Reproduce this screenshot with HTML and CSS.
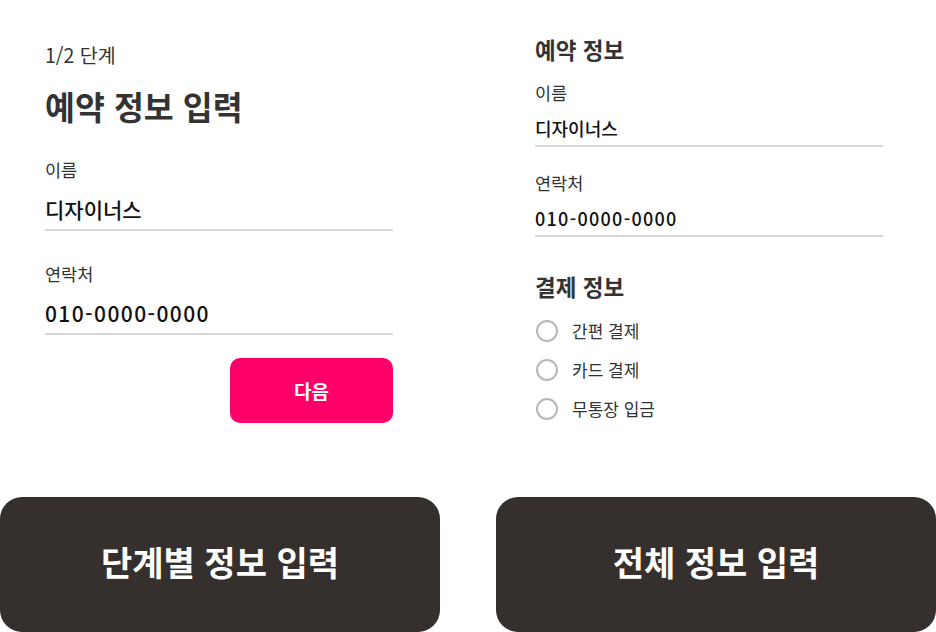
FILE: index.html
```html
<!DOCTYPE html>
<html lang="ko">
<head>
    <meta charset="UTF-8">
    <meta name="viewport" content="width=device-width, initial-scale=1.0">
    <title>예약 정보 입력</title>
    <link rel="stylesheet" href="styles.css">
</head>
<body>
    <div class="layout">
        <!-- 단계별 입력 -->
        <section class="panel panel-step">
            <p class="step">1/2 단계</p>
            <h1 class="step-title">예약 정보 입력</h1>
            <div class="field">
                <label class="field-label">이름</label>
                <div class="field-value">디자이너스</div>
            </div>
            <div class="field">
                <label class="field-label">연락처</label>
                <div class="field-value tel">010-0000-0000</div>
            </div>
            <div class="actions">
                <button type="button" class="next-btn">다음</button>
            </div>
        </section>

        <!-- 전체 입력 -->
        <section class="panel panel-full">
            <h2 class="group-title">예약 정보</h2>
            <div class="field">
                <label class="field-label">이름</label>
                <div class="field-value">디자이너스</div>
            </div>
            <div class="field">
                <label class="field-label">연락처</label>
                <div class="field-value tel">010-0000-0000</div>
            </div>
            <h2 class="group-title pay-title">결제 정보</h2>
            <ul class="radio-list">
                <li class="radio-item"><span class="radio"></span>간편 결제</li>
                <li class="radio-item"><span class="radio"></span>카드 결제</li>
                <li class="radio-item"><span class="radio"></span>무통장 입금</li>
            </ul>
        </section>

        <div class="card">단계별 정보 입력</div>
        <div class="card">전체 정보 입력</div>
    </div>
</body>
</html>
```

FILE: styles.css
```css
* {
    margin: 0;
    padding: 0;
    box-sizing: border-box;
    font-family: 'Noto Sans CJK KR', 'Noto Sans', sans-serif;
}

body {
    background: #fff;
    color: #333;
    width: 936px;
    height: 632px;
    overflow: hidden;
}

.layout {
    display: grid;
    grid-template-columns: 440px 440px;
    grid-template-rows: 497px 135px;
    column-gap: 56px;
}

/* Panels */
.panel-step {
    padding: 41px 47px 0 45px;
}

.panel-full {
    padding: 33px 53px 0 39px;
}

.step {
    font-size: 19.5px;
    line-height: 28px;
    color: #333;
}

.step-title {
    margin-top: 17px;
    font-size: 32.5px;
    line-height: 40px;
    font-weight: 700;
    color: #333;
}

.field {
    border-bottom: 2px solid #d6d6d6;
}

.field-label {
    display: block;
    font-size: 17.5px;
    line-height: 24px;
    color: #333;
}

.field-value {
    font-size: 21px;
    line-height: 28px;
    font-weight: 500;
    color: #111;
}

.field-value.tel {
    letter-spacing: 1.4px;
}

.panel-step .field {
    margin-top: 32px;
    padding-bottom: 6px;
}

.panel-step .field + .field {
    margin-top: 31px;
}

.panel-step .field-value {
    margin-top: 13px;
}

.actions {
    display: flex;
    justify-content: flex-end;
    margin-top: 23px;
}

.next-btn {
    width: 163px;
    height: 65px;
    border: none;
    border-radius: 10px;
    background: #ff006a;
    color: #fff;
    font-size: 19px;
    font-weight: 700;
}

/* 전체 입력 */
.group-title {
    font-size: 22.5px;
    line-height: 32px;
    font-weight: 700;
    color: #333;
}

.panel-full .field {
    margin-top: 16px;
    padding-bottom: 3px;
}

.panel-full .field + .field {
    margin-top: 24px;
}

.panel-full .field-value {
    margin-top: 9px;
    font-size: 18px;
}

.panel-full .field-value.tel {
    letter-spacing: 1.3px;
}

.pay-title {
    margin-top: 33px;
}

.radio-list {
    list-style: none;
    margin-top: 9px;
}

.radio-item {
    display: flex;
    align-items: center;
    gap: 14px;
    height: 39px;
    font-size: 17px;
    color: #333;
}

.radio {
    width: 22px;
    height: 22px;
    border: 2px solid #b8b8b8;
    border-radius: 50%;
    margin-left: 1px;
}

/* 하단 카드 */
.card {
    display: flex;
    justify-content: center;
    align-items: center;
    padding-bottom: 6px;
    background: #35302d;
    border-radius: 22px;
    color: #fff;
    font-size: 34px;
    font-weight: 700;
}
```
